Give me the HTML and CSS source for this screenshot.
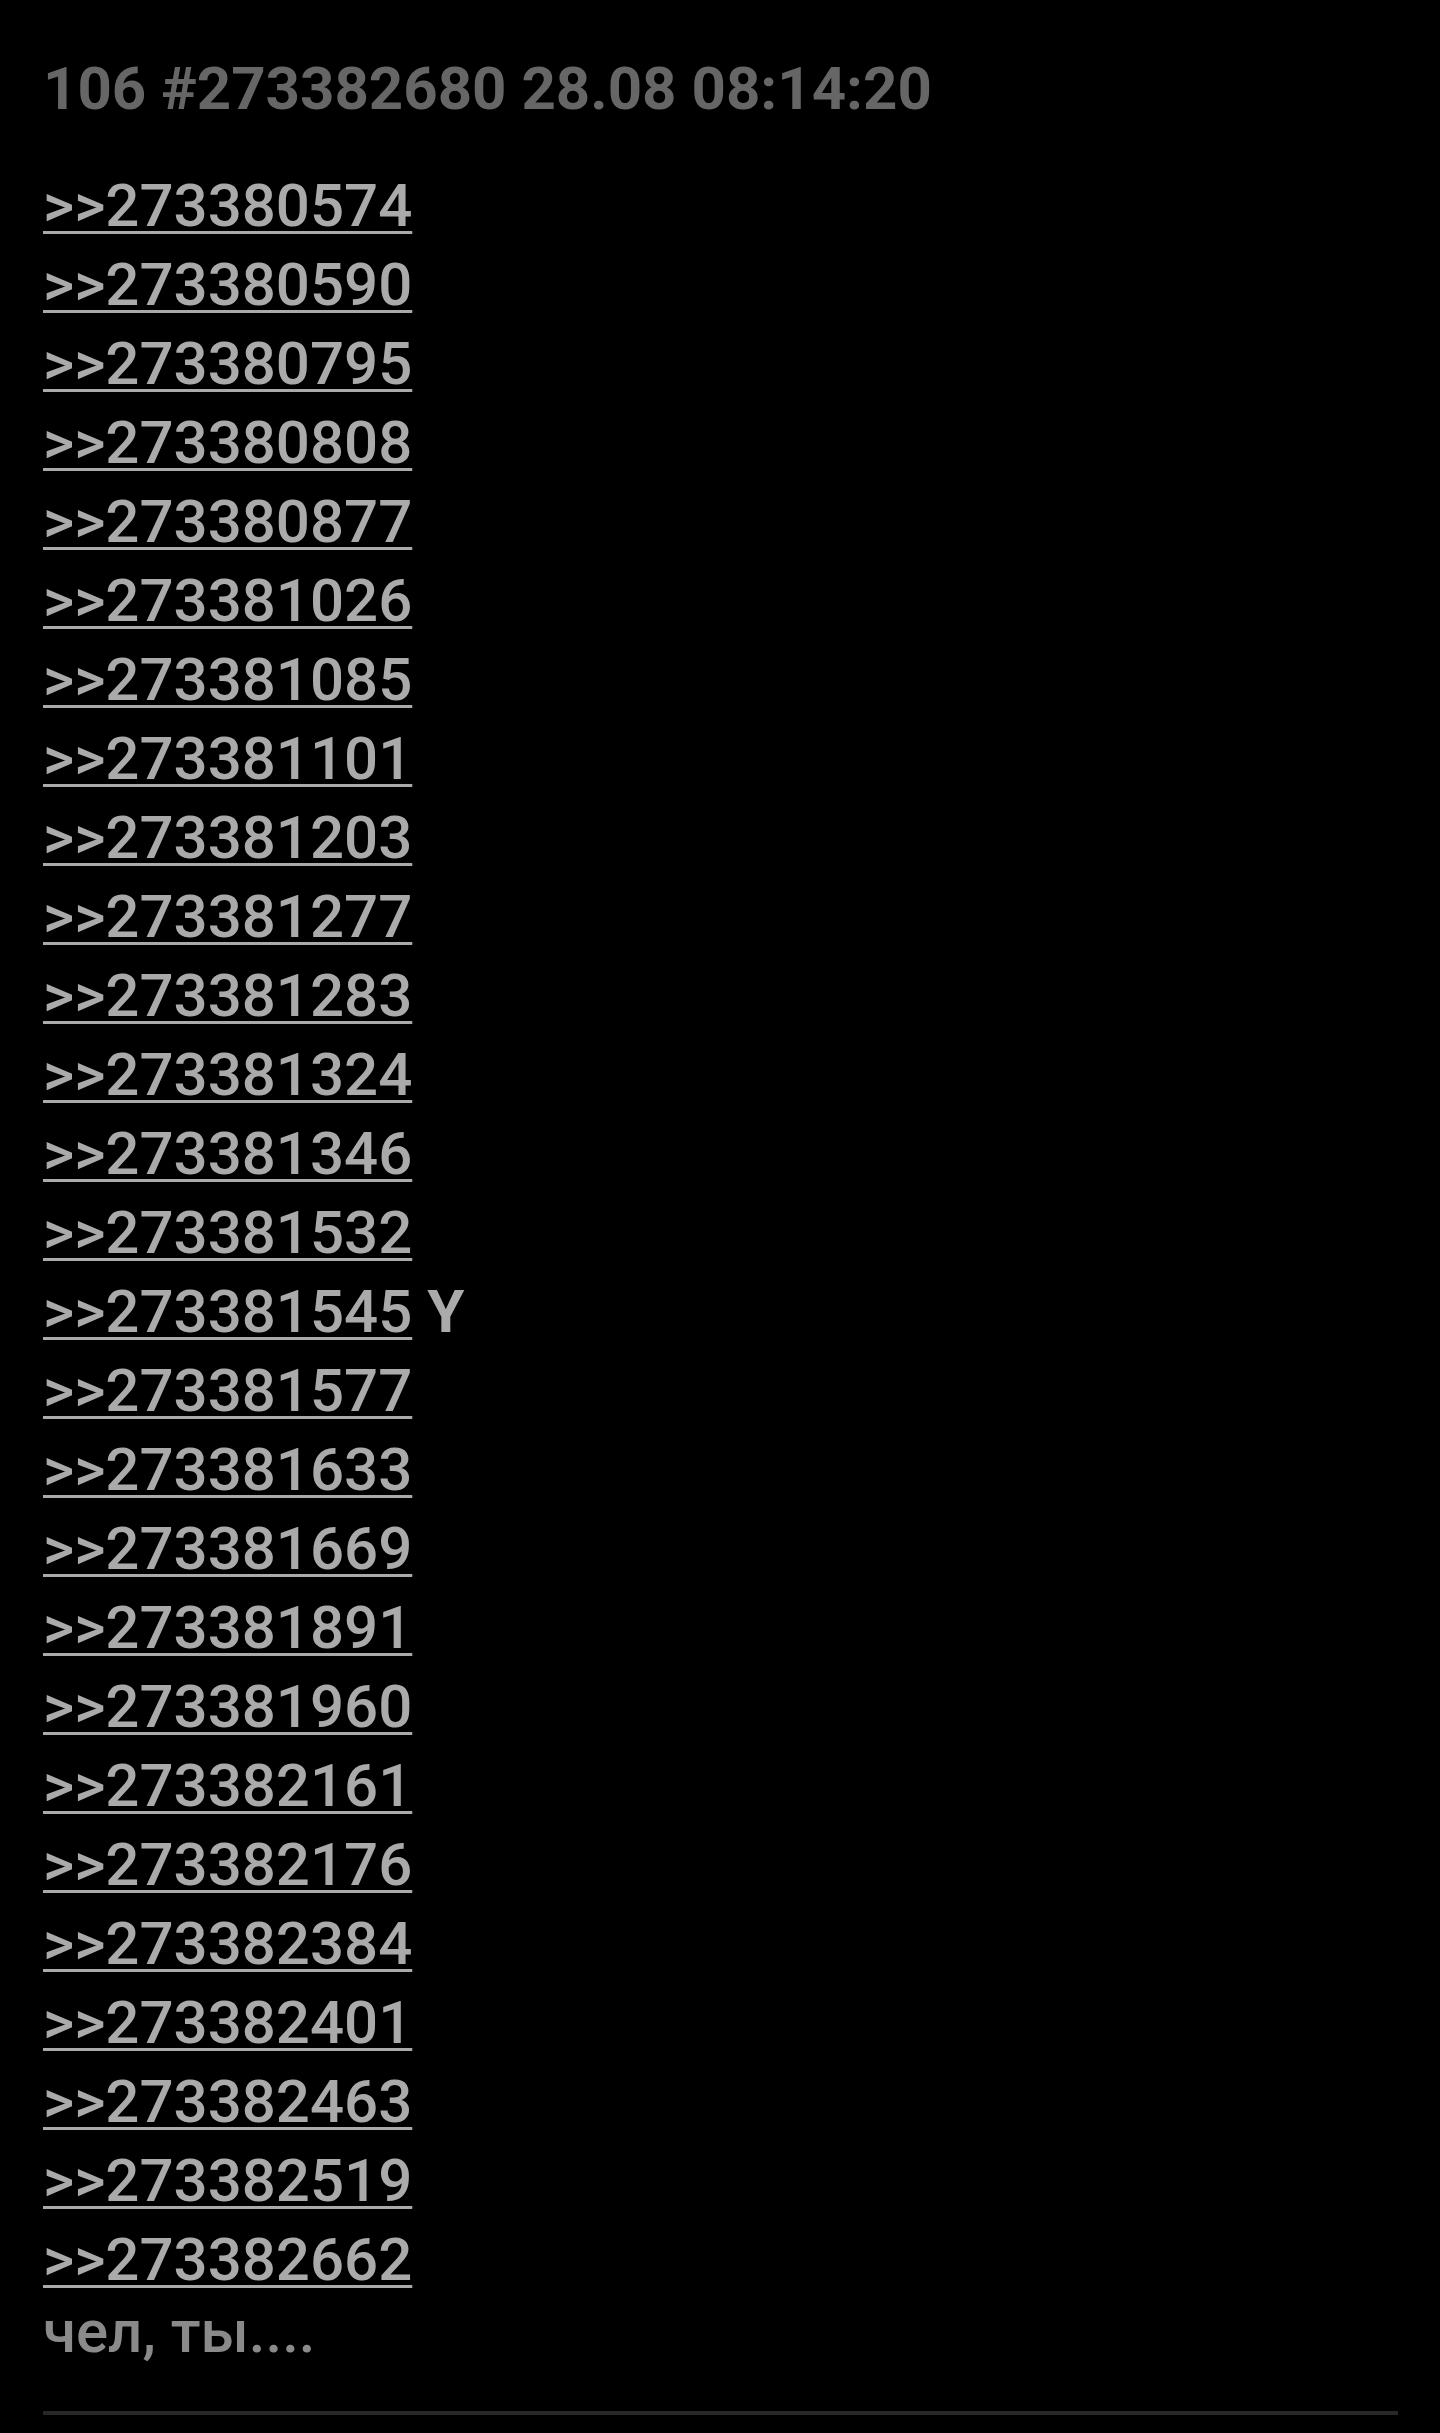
FILE: index.html
```html
<!DOCTYPE html>
<html lang="ru">
<head>
<meta charset="utf-8">
<title>106 #273382680</title>
<link rel="stylesheet" href="styles.css">
</head>
<body>
<article class="post">
  <div class="post-head">106 #273382680 28.08 08:14:20</div>
  <div class="post-body">
    <a class="reply" href="#">&gt;&gt;273380574</a><br>
    <a class="reply" href="#">&gt;&gt;273380590</a><br>
    <a class="reply" href="#">&gt;&gt;273380795</a><br>
    <a class="reply" href="#">&gt;&gt;273380808</a><br>
    <a class="reply" href="#">&gt;&gt;273380877</a><br>
    <a class="reply" href="#">&gt;&gt;273381026</a><br>
    <a class="reply" href="#">&gt;&gt;273381085</a><br>
    <a class="reply" href="#">&gt;&gt;273381101</a><br>
    <a class="reply" href="#">&gt;&gt;273381203</a><br>
    <a class="reply" href="#">&gt;&gt;273381277</a><br>
    <a class="reply" href="#">&gt;&gt;273381283</a><br>
    <a class="reply" href="#">&gt;&gt;273381324</a><br>
    <a class="reply" href="#">&gt;&gt;273381346</a><br>
    <a class="reply" href="#">&gt;&gt;273381532</a><br>
    <a class="reply" href="#">&gt;&gt;273381545</a> <span class="mark">Y</span><br>
    <a class="reply" href="#">&gt;&gt;273381577</a><br>
    <a class="reply" href="#">&gt;&gt;273381633</a><br>
    <a class="reply" href="#">&gt;&gt;273381669</a><br>
    <a class="reply" href="#">&gt;&gt;273381891</a><br>
    <a class="reply" href="#">&gt;&gt;273381960</a><br>
    <a class="reply" href="#">&gt;&gt;273382161</a><br>
    <a class="reply" href="#">&gt;&gt;273382176</a><br>
    <a class="reply" href="#">&gt;&gt;273382384</a><br>
    <a class="reply" href="#">&gt;&gt;273382401</a><br>
    <a class="reply" href="#">&gt;&gt;273382463</a><br>
    <a class="reply" href="#">&gt;&gt;273382519</a><br>
    <a class="reply" href="#">&gt;&gt;273382662</a>
  </div>
  <p class="post-text">чел, ты....</p>
  <hr class="divider">
</article>
</body>
</html>
```
FILE: styles.css
```css
html, body {
  margin: 0;
  padding: 0;
  background: #000;
}
body {
  font-family: Roboto, "Noto Sans", sans-serif;
  font-size: 60px;
  color: #aaa;
}
.post {
  padding: 49px 42px 0 43px;
}
.post-head {
  font-weight: 700;
  color: #666;
  line-height: 79px;
}
.post-body {
  margin-top: 38px;
  line-height: 79px;
}
.reply {
  color: #aaa;
  font-weight: 500;
  text-decoration: underline;
  text-decoration-thickness: 3px;
  text-underline-offset: 5px;
}
.mark {
  font-weight: 700;
  color: #aaa;
}
.post-text {
  margin: -7px 0 0;
  line-height: 79px;
  font-weight: 500;
  color: #8a8a8a;
}
.divider {
  margin: 40px 0 0;
  border: 0;
  height: 4px;
  background: #282828;
}
```
